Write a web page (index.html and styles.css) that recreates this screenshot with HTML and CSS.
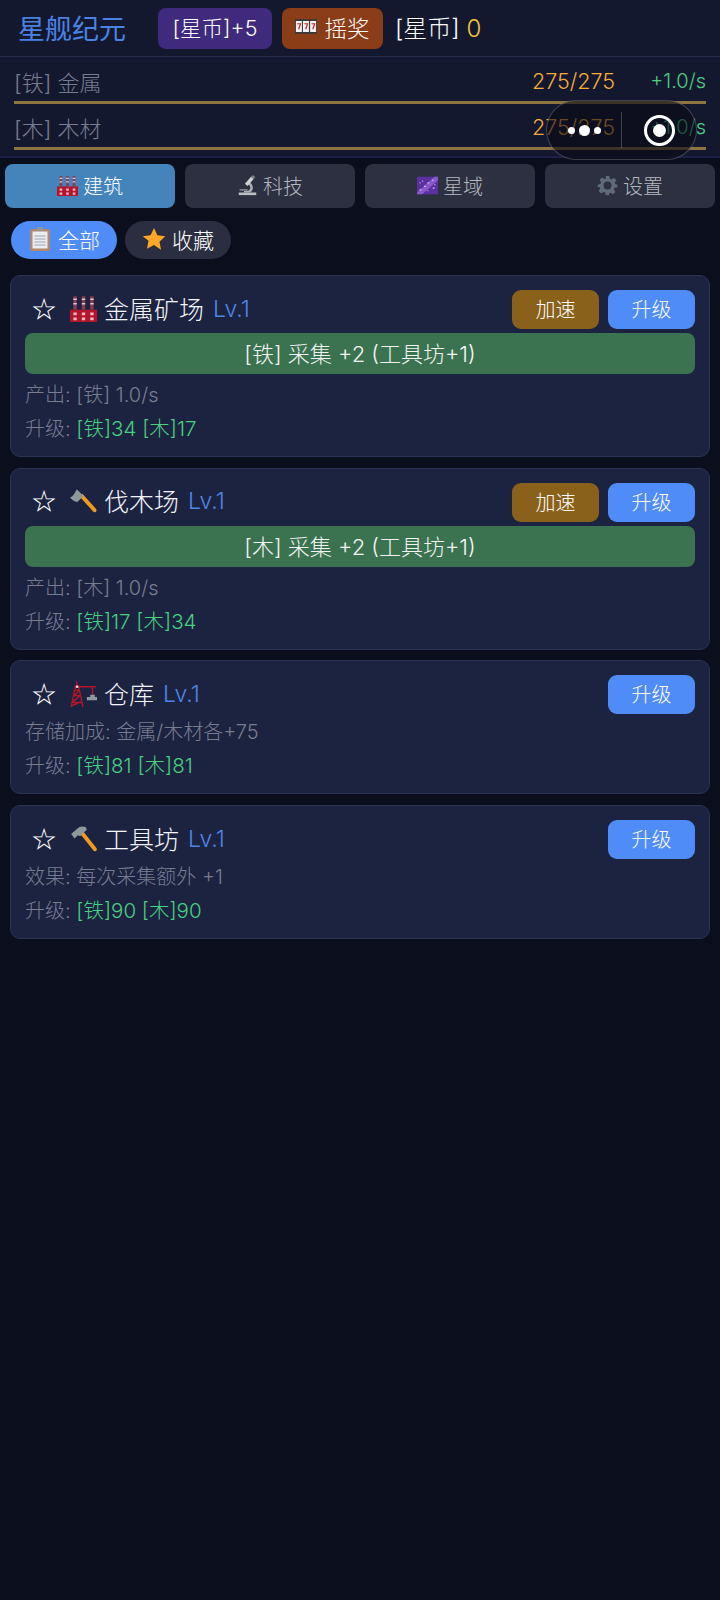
FILE: index.html
```html
<!DOCTYPE html>
<html lang="zh">
<head>
    <meta charset="UTF-8">
    <title>星舰纪元</title>
    <link rel="stylesheet" href="styles.css">
</head>
<body>
    <svg class="defs" width="0" height="0">
        <defs>
            <symbol id="factory" viewBox="0 0 24 24">
                <path d="M0 13h24v11H0z" fill="#b3152c"/>
                <path d="M3 1h3v12H3zM10.500 1h3v12h-3zM18 1h3v12h-3z" fill="#8a3a50"/>
                <path d="M3 3h3v1.500H3zM10.500 3h3v1.500h-3zM18 3h3v1.500h-3zM3 7h3v1.500H3zM10.500 7h3v1.500h-3zM18 7h3v1.500h-3z" fill="#e8c8d0"/>
                <path d="M3 15.500h3v2.500H3zM10.500 15.500h3v2.500h-3zM18 15.500h3v2.500h-3zM3 20h3v2.500H3zM10.500 20h3v2.500h-3zM18 20h3v2.500h-3z" fill="#f0b8c0"/>
            </symbol>
            <symbol id="microscope" viewBox="0 0 24 24">
                <path d="M2 20h20v3H2z" fill="#b9bfc4"/>
                <path d="M12 8a6.500 6.500 0 0 1 3 12H8v-2h5a4 4 0 0 0-1-7.500z" fill="#aab0b5"/>
                <path d="M9 10l7-8 3 2.500-7 8z" fill="#ccd2d6"/>
                <path d="M16 2l2-2 3 2.500-2 2z" fill="#7c8388"/>
                <path d="M3 16h9v2H3z" fill="#7c8388"/>
            </symbol>
            <symbol id="milkyway" viewBox="0 0 24 20">
                <path d="M0 0h24v20H0z" fill="#5b30a0"/>
                <path d="M0 18L20 0h4v4L6 20H0z" fill="#8a58c8"/>
                <path d="M3 15l2 0M8 11h2M12 7h2M17 4h2M6 5h1M18 13h2M12 16h1M3 7h1M20 9h1" stroke="#d8c4f8" stroke-width="1.200"/>
            </symbol>
            <symbol id="gear" viewBox="0 0 24 24">
                <path fill-rule="evenodd" fill="#5f6b78" d="M10 1h4l.6 3.200 2 .8L19.300 3.200l2.800 2.800-1.800 2.700.8 2L23.300 11v3l-3.200.6-.8 2 1.800 2.700-2.800 2.800-2.700-1.800-2 .8L14 23h-4l-.6-2.900-2-.8-2.700 1.800-2.800-2.800 1.800-2.700-.8-2L.8 14v-3l3.100-.6.8-2L2.900 5.700l2.800-2.800 2.700 1.800 2-.8zM12 7.500a4.500 4.500 0 1 0 0 9 4.500 4.500 0 0 0 0-9z"/>
            </symbol>
            <symbol id="axe" viewBox="0 0 24 24">
                <path d="M8.500 7.500l2.500-2.500 12 13.500c.8 1 .8 1.800 0 2.500s-1.700.6-2.500-.2z" fill="#f09a20"/>
                <path d="M6 1l6 6-5.500 5.500C4 12 1.500 10.500 0 8.500 2.500 7.500 4.500 4.500 6 1z" fill="#8f989c"/>
            </symbol>
            <symbol id="hammer" viewBox="0 0 24 24">
                <path d="M9.500 8.500L12 6l11.500 14.500c.6.900.5 1.600-.2 2.300s-1.500.7-2.300 0z" fill="#f09a20"/>
                <path d="M1 8l7-6c2-1 4-1 6 0l1 2-6 6-2-1-3 3z" fill="#8f989c"/>
            </symbol>
            <symbol id="crane" viewBox="0 0 24 24">
                <path d="M1 24L5 5h2.500l4 19M2 20h8.500M3 14h6.500M4 9h4.500M1.500 23l8-3.500M3 19l6-5M4 13.500l4.500-4.500M6 5V1M7 6h16M20 6v7" fill="none" stroke="#b3152c" stroke-width="1.200"/>
                <path d="M18 13h4v2h2v3H15v-3h3z" fill="#8f989c"/>
                <circle cx="6.300" cy="6" r="1.200" fill="#e8d8d8"/>
            </symbol>
            <symbol id="slots" viewBox="0 0 24 16">
                <path d="M0 0h24v16H0z" fill="#3a3a3a"/>
                <path d="M1 2h6.500v12H1zM8.700 2h6.500v12H8.700zM16.500 2H23v12h-6.500z" fill="#f2f2f2"/>
                <path d="M2.500 5H6L4 11M10.200 5h3.500l-2 6M18 5h3.500l-2 6" fill="none" stroke="#c02a2a" stroke-width="1.300"/>
            </symbol>
            <symbol id="clipboard" viewBox="0 0 20 24">
                <rect x="0" y="2" width="20" height="22" rx="2.500" fill="#b4876a"/>
                <rect x="2.500" y="4.500" width="15" height="17" fill="#e8edf0"/>
                <path d="M4.500 9h11M4.500 12h11M4.500 15h11M4.500 18h11" stroke="#9aa8b0" stroke-width="1.200"/>
                <rect x="7" y="0" width="6" height="4" rx="1" fill="#8f989c"/>
            </symbol>
            <symbol id="fullstar" viewBox="0 0 24 24">
                <path d="M12 1l3.400 7.300 7.900 1-5.800 5.500 1.500 7.900L12 18l-7 3.700 1.500-7.900L.7 9.300l7.900-1z" fill="#ffa726"/>
            </symbol>
        </defs>
    </svg>

    <header class="topbar">
        <h1 class="game-title">星舰纪元</h1>
        <button class="top-btn coin-btn">[星币]+5</button>
        <button class="top-btn lottery-btn"><svg class="slots-icon"><use href="#slots"/></svg>摇奖</button>
        <div class="coin-count">[星币] <span class="coin-num">0</span></div>
    </header>

    <section class="resources">
        <div class="res-row">
            <div class="res-line">
                <span class="res-name">[铁] 金属</span>
                <span class="res-amount">275/275</span>
                <span class="res-rate">+1.0/s</span>
            </div>
            <div class="res-bar"></div>
        </div>
        <div class="res-row">
            <div class="res-line">
                <span class="res-name">[木] 木材</span>
                <span class="res-amount">275/275</span>
                <span class="res-rate">+1.0/s</span>
            </div>
            <div class="res-bar"></div>
        </div>
    </section>

    <div class="capsule">
        <div class="capsule-dots"><i class="dot-sm"></i><i class="dot-lg"></i><i class="dot-sm"></i></div>
        <div class="capsule-line"></div>
        <div class="capsule-close"><i></i></div>
    </div>

    <nav class="tabs">
        <button class="tab active"><svg class="tab-icon"><use href="#factory"/></svg>建筑</button>
        <button class="tab"><svg class="tab-icon"><use href="#microscope"/></svg>科技</button>
        <button class="tab"><svg class="tab-icon"><use href="#milkyway"/></svg>星域</button>
        <button class="tab"><svg class="tab-icon"><use href="#gear"/></svg>设置</button>
    </nav>

    <div class="filters">
        <button class="filter active"><svg class="filter-icon"><use href="#clipboard"/></svg>全部</button>
        <button class="filter"><svg class="filter-icon"><use href="#fullstar"/></svg>收藏</button>
    </div>

    <main class="cards">
        <div class="card">
            <div class="card-head">
                <div class="card-title">
                    <span class="fav">☆</span>
                    <svg class="card-icon"><use href="#factory"/></svg>
                    <span class="card-name">金属矿场</span>
                    <span class="card-lv">Lv.1</span>
                </div>
                <button class="act speed">加速</button>
                <button class="act upgrade">升级</button>
            </div>
            <button class="collect">[铁] 采集 +2 (工具坊+1)</button>
            <p class="info">产出: [铁] 1.0/s</p>
            <p class="info">升级: <span class="cost">[铁]34 [木]17</span></p>
        </div>

        <div class="card">
            <div class="card-head">
                <div class="card-title">
                    <span class="fav">☆</span>
                    <svg class="card-icon"><use href="#axe"/></svg>
                    <span class="card-name">伐木场</span>
                    <span class="card-lv">Lv.1</span>
                </div>
                <button class="act speed">加速</button>
                <button class="act upgrade">升级</button>
            </div>
            <button class="collect">[木] 采集 +2 (工具坊+1)</button>
            <p class="info">产出: [木] 1.0/s</p>
            <p class="info">升级: <span class="cost">[铁]17 [木]34</span></p>
        </div>

        <div class="card">
            <div class="card-head">
                <div class="card-title">
                    <span class="fav">☆</span>
                    <svg class="card-icon"><use href="#crane"/></svg>
                    <span class="card-name">仓库</span>
                    <span class="card-lv">Lv.1</span>
                </div>
                <button class="act upgrade">升级</button>
            </div>
            <p class="info">存储加成: 金属/木材各+75</p>
            <p class="info">升级: <span class="cost">[铁]81 [木]81</span></p>
        </div>

        <div class="card">
            <div class="card-head">
                <div class="card-title">
                    <span class="fav">☆</span>
                    <svg class="card-icon"><use href="#hammer"/></svg>
                    <span class="card-name">工具坊</span>
                    <span class="card-lv">Lv.1</span>
                </div>
                <button class="act upgrade">升级</button>
            </div>
            <p class="info">效果: 每次采集额外 +1</p>
            <p class="info">升级: <span class="cost">[铁]90 [木]90</span></p>
        </div>
    </main>
</body>
</html>
```

FILE: styles.css
```css
* {
    box-sizing: border-box;
}

body {
    margin: 0;
    min-height: 1600px;
    position: relative;
    background-color: #0b0e1c;
    color: #fff;
    font-family: Inter, "Noto Sans CJK SC", sans-serif;
    font-weight: 300;
}

button {
    border: none;
    font-family: inherit;
    font-weight: inherit;
    color: #fff;
}

.defs {
    position: absolute;
}

.topbar {
    display: flex;
    align-items: center;
    height: 57px;
    padding: 0 18px;
    background-color: #14182f;
    border-bottom: 1px solid #272c4a;
}

.game-title {
    margin: 0 32px 2px 0;
    font-size: 27px;
    font-weight: 400;
    color: #4a82e4;
}

.top-btn {
    display: flex;
    align-items: center;
    justify-content: center;
    height: 41px;
    padding: 0 0 3px;
    border-radius: 8px;
    font-size: 21.500px;
}

.coin-btn {
    width: 114px;
    background-color: #3f2a7e;
}

.lottery-btn {
    width: 101px;
    margin-left: 10px;
    background-color: #8a3d17;
    gap: 7px;
    font-size: 22.500px;
}

.slots-icon {
    width: 22px;
    height: 15px;
}

.coin-count {
    margin: 0 0 3px 12px;
    font-size: 24px;
}

.coin-num {
    color: #f4c63c;
}

.resources {
    height: 101px;
    padding: 9px 14px 0;
    background-color: #14182f;
    border-bottom: 2px solid #1d1f45;
}

.res-row {
    height: 46px;
}

.res-line {
    display: flex;
    align-items: center;
    height: 29px;
    margin-bottom: 6px;
    font-size: 22px;
}

.res-name {
    flex: 1;
    color: #777d90;
}

.res-amount {
    width: 86px;
    color: #f5ac3a;
    font-size: 21.500px;
}

.res-rate {
    width: 88px;
    text-align: right;
    color: #48cf80;
    font-size: 20px;
}

.res-bar {
    height: 3px;
    background-color: #8d7440;
}

.capsule {
    position: absolute;
    left: 546px;
    top: 100px;
    width: 151px;
    height: 60px;
    display: flex;
    align-items: center;
    background-color: rgba(8, 9, 20, 0.6);
    border: 1.500px solid rgba(255, 255, 255, 0.22);
    border-radius: 30px;
}

.capsule-dots {
    width: 74px;
    display: flex;
    justify-content: center;
    align-items: center;
    gap: 4px;
}

.capsule-dots i {
    display: block;
    background-color: #fff;
    border-radius: 50%;
}

.dot-sm {
    width: 7px;
    height: 7px;
}

.dot-lg {
    width: 11px;
    height: 11px;
}

.capsule-line {
    width: 1px;
    height: 36px;
    background-color: rgba(255, 255, 255, 0.22);
}

.capsule-close {
    flex: 1;
    display: flex;
    justify-content: center;
    align-items: center;
}

.capsule-close i {
    width: 31px;
    height: 31px;
    border: 3px solid #fff;
    border-radius: 50%;
    position: relative;
}

.capsule-close i::after {
    content: '';
    position: absolute;
    left: 6px;
    top: 6px;
    width: 13px;
    height: 13px;
    background-color: #fff;
    border-radius: 50%;
}

.tabs {
    display: flex;
    gap: 10px;
    padding: 6px 5px 0;
}

.tab {
    flex: 1;
    height: 44px;
    padding-bottom: 2px;
    display: flex;
    align-items: center;
    justify-content: center;
    gap: 5px;
    background-color: #2c3040;
    border-radius: 8px;
    color: #b4b8c0;
    font-size: 20px;
}

.tab.active {
    background-color: #4484bb;
    color: #fff;
}

.tab-icon {
    width: 21px;
    height: 21px;
}

.filters {
    display: flex;
    gap: 8px;
    padding: 13px 11px 0;
}

.filter {
    width: 106px;
    height: 38px;
    padding-bottom: 3px;
    display: flex;
    align-items: center;
    justify-content: center;
    gap: 6px;
    background-color: #2b2e40;
    border-radius: 19px;
    font-size: 21px;
}

.filter.active {
    background-color: #4f8cf7;
}

.filter-icon {
    width: 24px;
    height: 24px;
}

.cards {
    display: flex;
    flex-direction: column;
    gap: 10.700px;
    padding: 16px 10px 0;
}

.card {
    padding: 14px 14px 10px;
    background-color: #1c2340;
    border: 1px solid #2a3354;
    border-radius: 10px;
}

.card-head {
    display: flex;
    align-items: center;
    gap: 9px;
    height: 39px;
    margin-bottom: 1px;
}

.card-title {
    flex: 1;
    display: flex;
    align-items: center;
    margin-bottom: 2px;
}

.fav {
    width: 45px;
    padding-left: 6px;
    font-size: 26px;
    font-family: "DejaVu Sans", sans-serif;
    line-height: 1;
}

.card-icon {
    width: 27px;
    height: 27px;
    margin-right: 7px;
}

.card-name {
    font-size: 25px;
    color: #f4f5fa;
    margin: 0 9px 2px 0;
}

.card-lv {
    font-size: 23px;
    color: #4f84e8;
}

.act {
    width: 87px;
    height: 39px;
    padding: 0 0 2px;
    border-radius: 9px;
    font-size: 20px;
}

.speed {
    background-color: #8a611a;
}

.upgrade {
    background-color: #4f8cf7;
}

.collect {
    display: block;
    width: 100%;
    height: 41px;
    margin: 4px 0;
    padding: 0 0 3px;
    background-color: #3b7350;
    border-radius: 8px;
    font-size: 22px;
    color: #f4f4f4;
}

.info {
    margin: 0;
    height: 34px;
    line-height: 34px;
    font-size: 20px;
    color: #777d90;
}

.cost {
    color: #48cf80;
    font-size: 20.500px;
}
```
